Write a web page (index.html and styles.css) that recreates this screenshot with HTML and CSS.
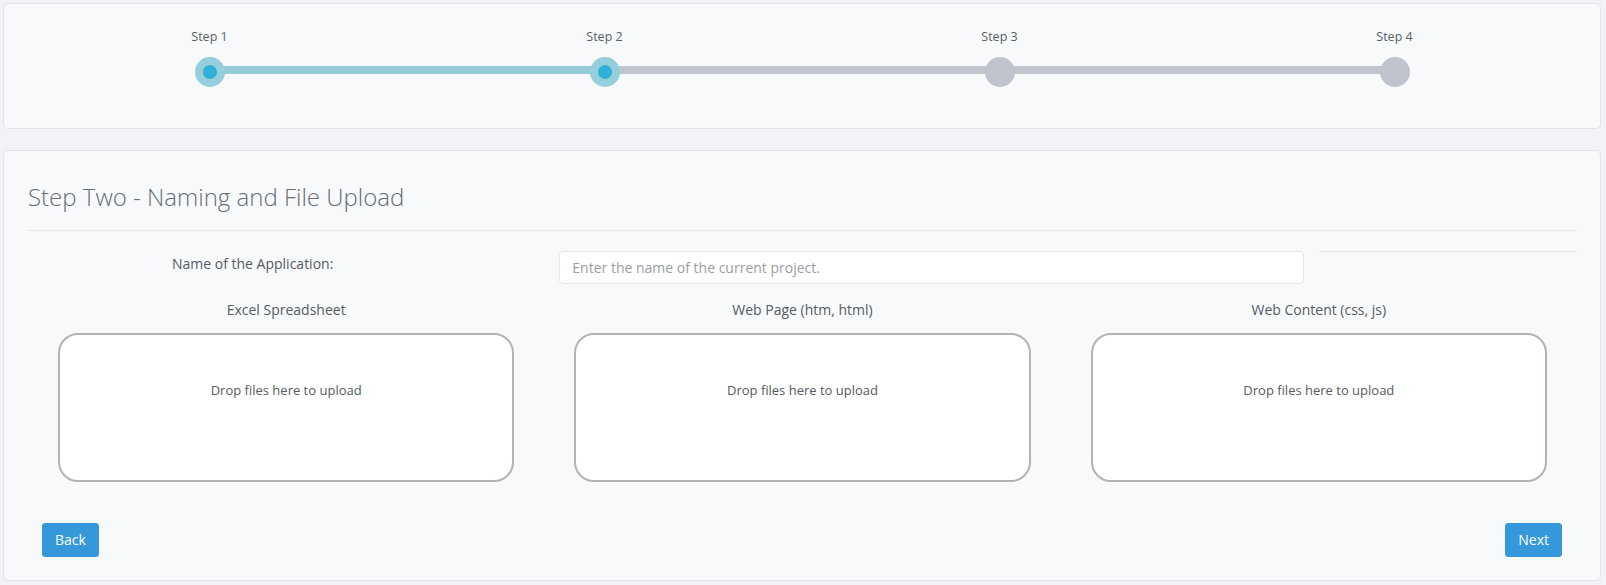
FILE: index.html
```html
<!DOCTYPE html>
<html lang="en">
<head>
<meta charset="utf-8">
<title>Step Two - Naming and File Upload</title>
<link rel="stylesheet" href="styles.css">
</head>
<body>
<div class="page">
  <section class="card steps-card">
    <div class="steps">
      <div class="step done first">
        <div class="step-label">Step 1</div>
        <div class="track"><span class="dot"></span></div>
      </div>
      <div class="step current">
        <div class="step-label">Step 2</div>
        <div class="track"><span class="dot"></span></div>
      </div>
      <div class="step">
        <div class="step-label">Step 3</div>
        <div class="track"><span class="dot"></span></div>
      </div>
      <div class="step last">
        <div class="step-label">Step 4</div>
        <div class="track"><span class="dot"></span></div>
      </div>
    </div>
  </section>

  <section class="card main-card">
    <div class="card-header">
      <h2 class="title">Step Two - Naming and File Upload</h2>
    </div>

    <div class="name-row">
      <label class="name-label" for="appname">Name of the Application:</label>
      <div class="name-input-col">
        <input id="appname" class="form-control" type="text" placeholder="Enter the name of the current project.">
      </div>
      <div class="name-rule"></div>
    </div>

    <div class="upload-row">
      <div class="upload-col">
        <div class="upload-heading">Excel Spreadsheet</div>
        <div class="dropzone"><div class="dz-message">Drop files here to upload</div></div>
      </div>
      <div class="upload-col">
        <div class="upload-heading">Web Page (htm, html)</div>
        <div class="dropzone"><div class="dz-message">Drop files here to upload</div></div>
      </div>
      <div class="upload-col">
        <div class="upload-heading">Web Content (css, js)</div>
        <div class="dropzone"><div class="dz-message">Drop files here to upload</div></div>
      </div>
    </div>

    <div class="actions">
      <button class="btn" type="button">Back</button>
      <button class="btn" type="button">Next</button>
    </div>
  </section>
</div>
</body>
</html>
```

FILE: styles.css
```css
* { box-sizing: border-box; }

html, body {
  margin: 0;
  padding: 0;
  background: #f1f3f6;
  font-family: "Open Sans", "Liberation Sans", Arial, sans-serif;
  color: #555b63;
}

.page {
  padding: 3px 0 0 3px;
  width: 1601px;
}

.card {
  width: 1598px;
  background: #f8f9fb;
  border: 1px solid #e2e4e8;
  border-radius: 5px;
}

/* ---------- step tracker ---------- */
.steps-card {
  padding: 24px 0 41px;
}

.steps {
  display: flex;
  justify-content: center;
}

.step {
  width: 395px;
  display: flex;
  flex-direction: column;
  align-items: center;
}

.step-label {
  font-size: 12.5px;
  line-height: 17px;
  color: #5a5f66;
}

.track {
  position: relative;
  width: 100%;
  height: 30px;
  margin-top: 12px;
  display: flex;
  justify-content: center;
}

.track::before,
.track::after {
  content: "";
  position: absolute;
  top: 9px;
  height: 8px;
  width: 50%;
  background: #bfc4cd;
}

.track::before { left: 0; }
.track::after { right: 0; }

.first .track::before,
.last .track::after { display: none; }

.done .track::before,
.done .track::after,
.current .track::before {
  background: #95cddb;
}

.dot {
  position: relative;
  z-index: 1;
  width: 30px;
  height: 30px;
  border-radius: 50%;
  background: #bfc4cd;
  display: flex;
  align-items: center;
  justify-content: center;
}

.done .dot,
.current .dot {
  background: #95cedc;
}

.done .dot::after,
.current .dot::after {
  content: "";
  width: 14px;
  height: 14px;
  border-radius: 50%;
  background: #2fb1d8;
}

/* ---------- main card ---------- */
.main-card {
  margin-top: 21px;
  padding: 33px 23px 23px 24px;
}

.card-header {
  border-bottom: 1px solid #e6e8eb;
  padding-bottom: 20px;
}

.title {
  margin: 0;
  font-size: 24px;
  line-height: 26px;
  font-weight: 300;
  color: #676c75;
}

.name-row {
  margin-top: 20px;
  display: grid;
  grid-template-columns: 4fr 6fr 2fr;
  align-items: start;
}

.name-label {
  text-align: center;
  padding-right: 67px;
  padding-top: 3px;
  font-size: 14px;
  line-height: 20px;
  color: #555b63;
}

.name-input-col {
  padding: 0 15px;
}

.form-control {
  display: block;
  width: 100%;
  height: 33px;
  padding: 6px 12px;
  font-family: inherit;
  font-size: 14px;
  color: #555;
  background: #fff;
  border: 1px solid #e5e6e8;
  border-radius: 4px;
  outline: none;
}

.form-control::placeholder {
  color: #9a9da2;
}

.name-rule {
  border-top: 1px solid #e6e8eb;
  height: 1px;
}

.upload-row {
  margin-top: 16px;
  display: grid;
  grid-template-columns: 1fr 1fr 1fr;
}

.upload-col {
  padding: 0 30px;
}

.upload-heading {
  text-align: center;
  font-size: 14px;
  line-height: 20px;
  color: #555b63;
  margin-bottom: 13px;
}

.dropzone {
  min-height: 149px;
  background: #fff;
  border: 2px solid #b3b3b3;
  border-radius: 20px;
  padding: 20px;
}

.dz-message {
  margin: 26px 0;
  text-align: center;
  font-size: 13px;
  line-height: 19px;
  color: #555b63;
}

.actions {
  margin-top: 41px;
  padding: 0 15px 0 14px;
  display: flex;
  justify-content: space-between;
}

.btn {
  height: 34px;
  padding: 6px 12px;
  font-family: inherit;
  font-size: 14px;
  line-height: 20px;
  color: #fff;
  background: #3498db;
  border: 1px solid #3498db;
  border-radius: 3px;
  cursor: pointer;
}
```
